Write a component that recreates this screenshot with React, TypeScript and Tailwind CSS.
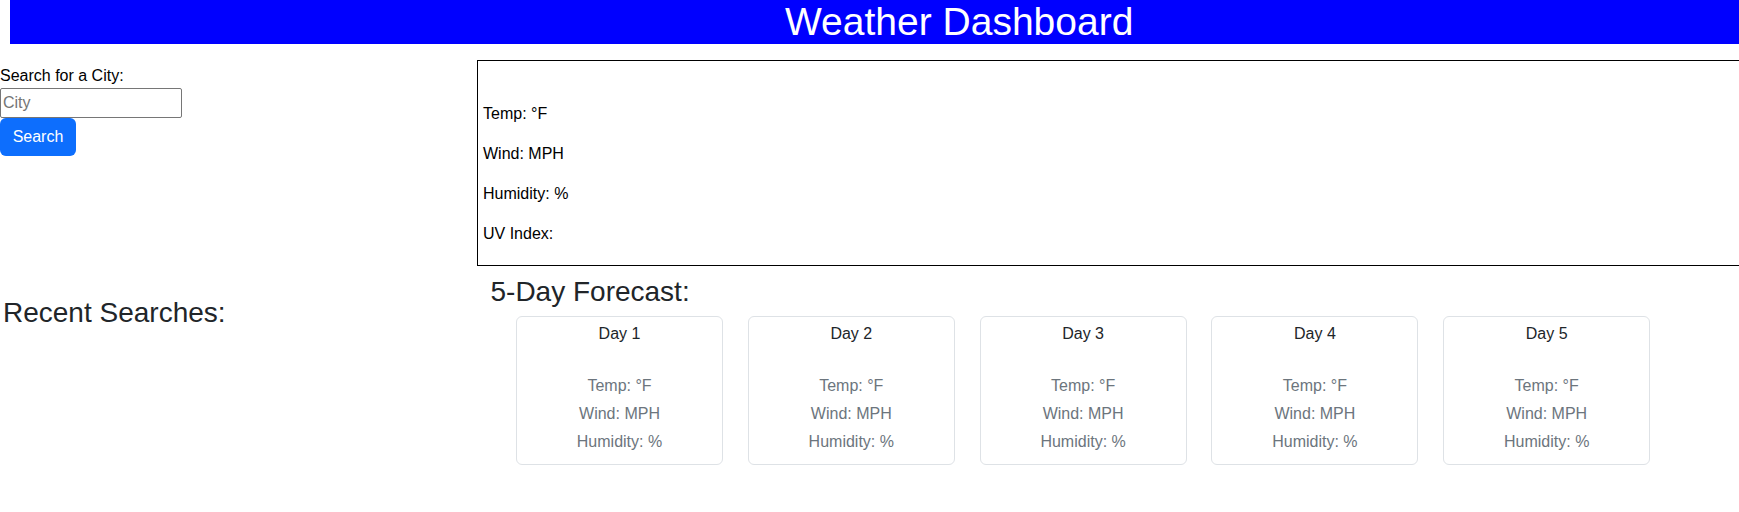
import React from "react";

const days = ["Day 1", "Day 2", "Day 3", "Day 4", "Day 5"];

export default function App() {
  return (
    <div className="w-full min-h-[512px] overflow-hidden bg-white text-[#212529] font-['Liberation_Sans',Arial,sans-serif] text-[16px]">
      <header className="ml-[10px] h-[44px] bg-[#0000ff] text-white text-[39px] leading-[44px] pl-[775px] whitespace-nowrap">
        Weather Dashboard
      </header>

      <div className="flex">
        <div className="w-[477px] shrink-0 pt-[20px]">
          <label className="block leading-[24px] text-black">Search for a City:</label>
          <input
            type="text"
            placeholder="City"
            className="block w-[182px] h-[30px] border border-[#767676] rounded-[2px] px-[2px] text-[16px] placeholder:text-[#757575] outline-none"
          />
          <button className="block h-[38px] w-[76px] rounded-[6px] bg-[#0d6efd] text-white leading-[24px] text-[16px]">
            Search
          </button>
        </div>
        <div className="pt-[16px] shrink-0">
          <div className="w-[1300px] border border-black pt-[41px] pb-[3px] pl-[5px] text-black">
            <p className="leading-[24px] mb-[16px]">Temp: °F</p>
            <p className="leading-[24px] mb-[16px]">Wind: MPH</p>
            <p className="leading-[24px] mb-[16px]">Humidity: %</p>
            <p className="leading-[24px] mb-[16px]">UV Index:</p>
          </div>
        </div>
      </div>

      <div className="flex">
        <div className="w-[477px] shrink-0 pl-[3px]">
          <h3 className="mt-[29.5px] text-[28px] leading-[33.6px] font-medium">Recent Searches:</h3>
        </div>
        <div className="pl-[13.5px] shrink-0">
          <h3 className="mt-[8.5px] text-[28px] leading-[33.6px] font-medium">5-Day Forecast:</h3>
          <div className="mt-[8px] ml-[25.5px] flex gap-[24.8px]">
            {days.map((d) => (
              <div
                key={d}
                className="w-[207px] h-[149px] border border-[#dee2e6] rounded-[6px] pt-[5px] text-center"
              >
                <div className="leading-[24px] text-[#212529]">{d}</div>
                <div className="mt-[28px] leading-[24px] text-[#6c757d]">Temp: °F</div>
                <div className="mt-[4px] leading-[24px] text-[#6c757d]">Wind: MPH</div>
                <div className="mt-[4px] leading-[24px] text-[#6c757d]">Humidity: %</div>
              </div>
            ))}
          </div>
        </div>
      </div>
    </div>
  );
}
